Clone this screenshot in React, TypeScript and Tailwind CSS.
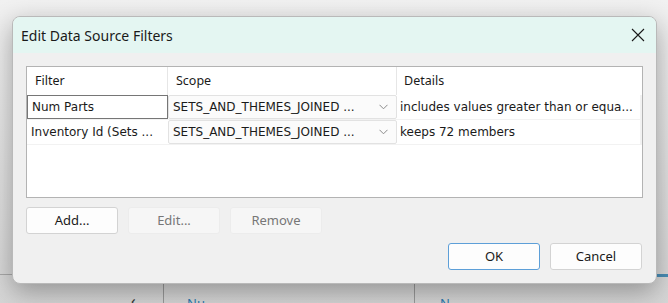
import React from "react";

const ui = "font-['Noto_Sans','Open_Sans',sans-serif]";
const data = "font-['DejaVu_Sans',Verdana,sans-serif]";

function Chevron() {
  return (
    <svg width="9" height="6" viewBox="0 0 9 6" className="shrink-0">
      <path d="M0.5 0.8 L4.5 4.8 L8.5 0.8" fill="none" stroke="#8a8a8a" strokeWidth="1" />
    </svg>
  );
}

function ScopeCell() {
  return (
    <div className="w-[229px] h-full flex items-center justify-between bg-[#fbfbfb] border border-[#e2e2e2] rounded-[2px] pl-[4px] pr-[8px]">
      <span className="text-[12px] text-[#1a1a1a]">SETS_AND_THEMES_JOINED ...</span>
      <Chevron />
    </div>
  );
}

export default function App() {
  const rows = [
    { filter: "Num Parts", details: "includes values greater than or equa...", focused: true },
    { filter: "Inventory Id (Sets ...", details: "keeps 72 members", focused: false },
  ];

  return (
    <div className="relative w-[668px] h-[303px] overflow-hidden bg-gradient-to-b from-[#f1f1f1] to-[#d6d6d6]">
      {/* app behind the dialog */}
      <div className="absolute left-0 top-[274px] w-[14px] h-px bg-[#a8a8a8]" />
      <div className="absolute right-0 top-[274px] w-[14px] h-[3px] bg-[#4a8db5]" />
      <div className="absolute left-[163px] top-[284px] w-px h-[19px] bg-[#9a9a9a]" />
      <div className="absolute left-[414px] top-[284px] w-px h-[19px] bg-[#9a9a9a]" />
      <div className={`absolute left-[131px] top-[289px] text-[15px] text-[#333] ${ui}`}>‹</div>
      <div className={`absolute left-[187px] top-[294px] text-[13px] text-[#2b7bb0] ${ui}`}>Nu</div>
      <div className={`absolute left-[440px] top-[294px] text-[13px] text-[#2b7bb0] ${ui}`}>N</div>

      {/* dialog */}
      <div className="relative ml-[12px] mt-[16px] w-[645px] h-[268px] rounded-[8px] border border-[#b9b9b9] bg-[#f0f0f0] overflow-hidden shadow-[0_8px_26px_rgba(0,0,0,0.32)] flex flex-col">
        <div className="h-[36px] shrink-0 bg-[#e4f6f2] flex items-center justify-between pl-[8px] pr-[11px]">
          <span className={`text-[14px] text-[#1a1a1a] ${ui}`}>Edit Data Source Filters</span>
          <svg width="14" height="14" viewBox="0 0 14 14">
            <path d="M1 1 L13 13 M13 1 L1 13" stroke="#1a1a1a" strokeWidth="1.1" />
          </svg>
        </div>

        <div className="flex-1 flex flex-col px-[13px] pt-[13px]">
          {/* filter table */}
          <div className="w-[617px] h-[132px] border border-[#b3b3b3] bg-white flex flex-col">
            <div className={`h-[28px] flex items-center text-[12.5px] text-[#1a1a1a] ${ui}`}>
              <div className="w-[141px] h-full flex items-center pl-[8px] border-r border-[#e6e6e6]">Filter</div>
              <div className="w-[229px] h-full flex items-center pl-[8px] border-r border-[#e6e6e6]">Scope</div>
              <div className="flex-1 h-full flex items-center pl-[7px]">Details</div>
            </div>
            <div className={`flex flex-col gap-px bg-[#f2f2f2] pb-px ${data}`}>
              {rows.map((r) => (
                <div key={r.filter} className="h-[24px] flex bg-white">
                  <div
                    className={`w-[141px] h-full flex items-center pl-[4px] text-[12px] text-[#1a1a1a] whitespace-nowrap overflow-hidden ${
                      r.focused ? "border border-[#767676]" : ""
                    }`}
                  >
                    {r.filter}
                  </div>
                  <ScopeCell />
                  <div className="flex-1 h-full flex items-center pl-[3px] text-[12px] text-[#1a1a1a] whitespace-nowrap overflow-hidden border-r-2 border-[#f2f2f2]">
                    {r.details}
                  </div>
                </div>
              ))}
            </div>
          </div>

          {/* add / edit / remove */}
          <div className={`flex gap-[10px] mt-[9px] text-[13px] ${ui}`}>
            <button className="w-[92px] h-[27px] bg-[#fdfdfd] border border-[#d3d3d3] rounded-[3px] text-[#1a1a1a]">
              Add...
            </button>
            <button className="w-[92px] h-[27px] bg-[#f6f6f6] border border-[#ececec] rounded-[3px] text-[#777]">
              Edit...
            </button>
            <button className="w-[92px] h-[27px] bg-[#f6f6f6] border border-[#ececec] rounded-[3px] text-[#777]">
              Remove
            </button>
          </div>

          {/* ok / cancel */}
          <div className={`flex justify-end gap-[10px] mt-[9px] pr-[1px] text-[13px] ${ui}`}>
            <button className="w-[92px] h-[27px] bg-[#fdfdfd] border border-[#5d9fd8] rounded-[3px] text-[#1a1a1a]">
              OK
            </button>
            <button className="w-[92px] h-[27px] bg-[#fdfdfd] border border-[#d3d3d3] rounded-[3px] text-[#1a1a1a]">
              Cancel
            </button>
          </div>
        </div>
      </div>
    </div>
  );
}
